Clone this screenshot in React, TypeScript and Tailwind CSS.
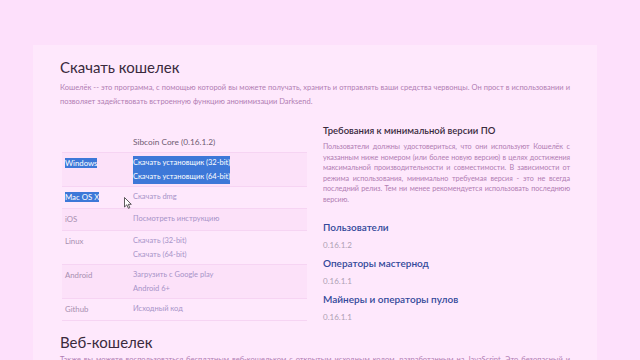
import React from "react";

const font = { fontFamily: "Lato, 'Noto Sans', sans-serif" };

interface Row {
  os: string;
  links: string[];
  selected?: boolean;
  striped?: boolean;
  selectOs?: boolean;
}

const rows: Row[] = [
  { os: "Windows", links: ["Скачать установщик (32-bit)", "Скачать установщик (64-bit)"], selected: true, selectOs: true, striped: true },
  { os: "Mac OS X", links: ["Скачать dmg"], selectOs: true },
  { os: "iOS", links: ["Посмотреть инструкцию"], striped: true },
  { os: "Linux", links: ["Скачать (32-bit)", "Скачать (64-bit)"] },
  { os: "Android", links: ["Загрузить с Google play", "Android 6+"], striped: true },
  { os: "Github", links: ["Исходный код"] },
];

const introLines = [
  "Кошелёк -- это программа, с помощью которой вы можете получать, хранить и отправлять ваши средства червонцы. Он прост в использовании и",
  "позволяет задействовать встроенную функцию анонимизации Darksend.",
];

const reqLines = [
  "Пользователи должны удостовериться, что они используют Кошелёк с",
  "указанным ниже номером (или более новую версию) в целях достижения",
  "максимальной производительности и совместимости. В зависимости от",
  "режима использования, минимально требуемая версия - это не всегда",
  "последний релиз. Тем ни менее рекомендуется использовать последнюю",
  "версию.",
];

// each line but the last is stretched edge to edge, like a justified paragraph
const Justified: React.FC<{ lines: string[]; className: string }> = ({ lines, className }) => (
  <p className={className}>
    {lines.map((l, i) => (
      <span
        key={i}
        className={`block whitespace-nowrap ${i < lines.length - 1 ? "text-justify [text-align-last:justify]" : ""}`}
      >
        {l}
      </span>
    ))}
  </p>
);

const Sel: React.FC<{ on?: boolean; children: React.ReactNode; block?: boolean }> = ({ on, children, block }) =>
  on ? (
    <span className={`bg-[#3d78d8] text-white ${block ? "inline-block leading-[14px]" : ""}`}>{children}</span>
  ) : (
    <>{children}</>
  );

const Cursor = () => (
  <svg className="absolute left-[62px] top-[10px]" width="8" height="12" viewBox="0 0 8 12">
    <path d="M0.5 0.5 L0.5 10 L2.8 7.8 L4.4 11.3 L5.8 10.7 L4.3 7.3 L7.3 7.3 Z" fill="#fff" stroke="#333" strokeWidth="0.8" />
  </svg>
);

const WalletTable = () => (
  <div className="ml-[2px] w-[245px] text-[7.5px]">
    <div className="flex h-[21px] items-center border-b border-[#f6d4f3]">
      <div className="w-[71px]" />
      <div className="text-[8.3px] text-[#6f5c72]">Sibcoin Core (0.16.1.2)</div>
    </div>
    {rows.map((r) => (
      <div
        key={r.os}
        className={`relative flex border-b border-[#f6d4f3] pt-[3px] ${r.striped ? "bg-[#fce1f9]" : ""} ${
          r.links.length > 1 ? "h-[34px]" : "h-[22px]"
        }`}
      >
        <div className="w-[71px] pl-[3px] text-[7.8px] leading-[14px] text-[#a78fb0]">
          <Sel on={r.selectOs}>{r.os}</Sel>
        </div>
        <div className="flex flex-col leading-[14px] text-[#a793c8]">
          {r.links.map((l) => (
            <div key={l}>
              <Sel on={r.selected} block>
                {l}
              </Sel>
            </div>
          ))}
        </div>
        {r.os === "Mac OS X" && <Cursor />}
      </div>
    ))}
  </div>
);

const Requirement: React.FC<{ title: string; version: string; first?: boolean }> = ({ title, version, first }) => (
  <div className={first ? "mt-[14px]" : "mt-[4.5px]"}>
    <div className="text-[10px] font-semibold leading-[14px] text-[#33489a]">{title}</div>
    <div className="mt-[6.5px] text-[8px] leading-[11px] text-[#ad9fb3]">{version}</div>
  </div>
);

export default function App() {
  return (
    <div className="h-[360px] w-[640px] overflow-hidden bg-[#fde0fb] pt-[45px]" style={font}>
      <div className="ml-[33px] h-[400px] w-[564px] bg-[#fee8fc] px-[27px] pt-[10px]">
        <h1 className="text-[15px] leading-[24px] text-[#3a2a3c]">Скачать кошелек</h1>
        <Justified lines={introLines} className="mt-[2px] text-[7.5px] leading-[14px] text-[#b17db3]" />
        <div className="mt-[23px] flex gap-[16px]">
          <WalletTable />
          <div className="w-[247px]">
            <h2 className="mt-[-8px] text-[9.5px] font-semibold leading-[14px] text-[#3a2a3c]">
              Требования к минимальной версии ПО
            </h2>
            <Justified
              lines={reqLines}
              className="mt-[4px] text-[7.2px] leading-[10.6px] tracking-[-0.05px] text-[#b17db3]"
            />
            <Requirement first title="Пользователи" version="0.16.1.2" />
            <Requirement title="Операторы мастернод" version="0.16.1.1" />
            <Requirement title="Майнеры и операторы пулов" version="0.16.1.1" />
          </div>
        </div>
        <h1 className="mt-[8px] text-[15px] leading-[22px] text-[#3a2a3c]">Веб-кошелек</h1>
        <p className="text-justify text-[7.5px] leading-[14px] text-[#b17db3]">
          Также вы можете воспользоваться бесплатным веб-кошельком с открытым исходным кодом, разработанным на JavaScript.
          Это безопасный и удобный способ хранить свои средства без установки программ.
        </p>
      </div>
    </div>
  );
}
